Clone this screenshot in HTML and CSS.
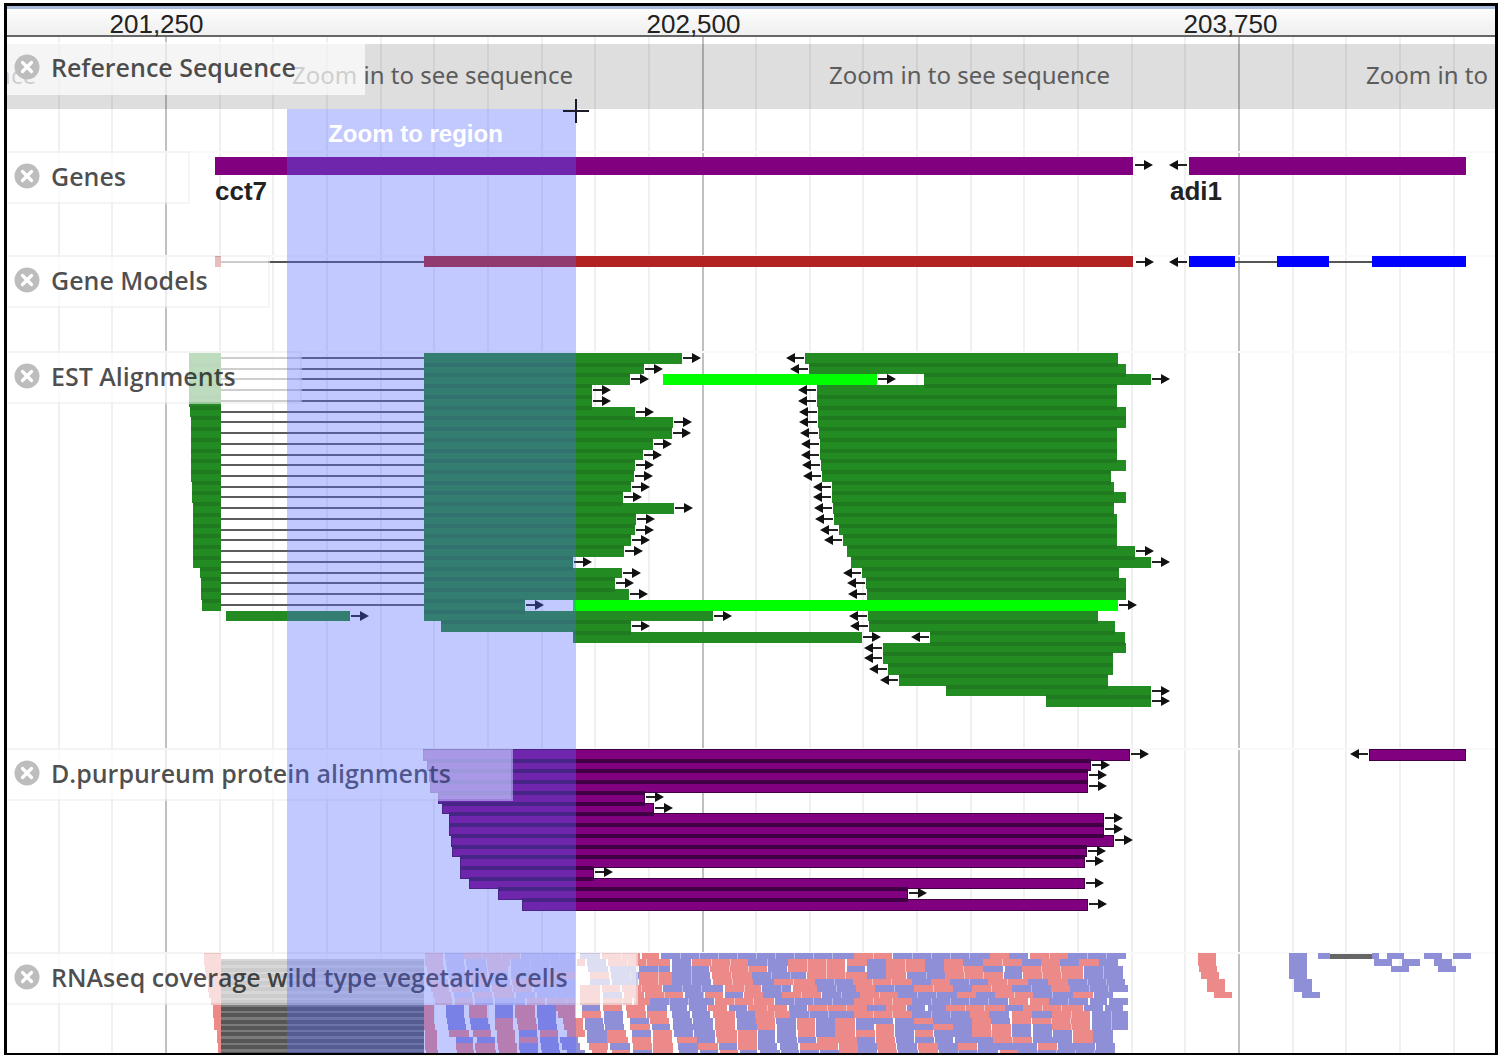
FILE: index.html
```html
<!DOCTYPE html>
<html lang="en">
<head>
<meta charset="utf-8">
<title>Genome browser</title>
<link rel="stylesheet" href="styles.css">
</head>
<body>
<svg class="defs" aria-hidden="true">
  <symbol id="close" viewBox="0 0 26 26">
    <circle cx="13" cy="13" r="12.500" fill="#bdbdbd"/>
    <path d="M8.500 8.500l9 9m0-9l-9 9" stroke="#fff" stroke-width="3.200" stroke-linecap="round"/>
  </symbol>
</svg>
<main class="browser">
  <svg class="grid" id="grid" aria-hidden="true"></svg>
  <header class="ruler">
    <span class="tick">201,250</span>
    <span class="tick">202,500</span>
    <span class="tick">203,750</span>
  </header>

  <section class="track sequence">
    <div class="band">
      <span class="hint">Zoom in to see sequence</span>
      <span class="hint">Zoom in to see sequence</span>
      <span class="hint">Zoom in to see sequence</span>
      <span class="hint">Zoom in to see sequence</span>
    </div>
    <div class="label label-sequence"><button class="close" type="button" aria-label="Close Reference Sequence"><svg class="icon"><use href="#close"/></svg></button><span>Reference Sequence</span></div>
  </section>

  <section class="track">
    <svg class="plot" id="genes" viewBox="7 151 1800 104" width="1800" height="104"></svg>
    <div class="label label-genes"><button class="close" type="button" aria-label="Close Genes"><svg class="icon"><use href="#close"/></svg></button><span>Genes</span></div>
  </section>

  <section class="track">
    <svg class="plot" id="models" viewBox="7 255 1800 96" width="1800" height="96"></svg>
    <div class="label label-models"><button class="close" type="button" aria-label="Close Gene Models"><svg class="icon"><use href="#close"/></svg></button><span>Gene Models</span></div>
  </section>

  <section class="track">
    <svg class="plot" id="est" viewBox="7 351 1800 397" width="1800" height="397"></svg>
    <div class="label label-est"><button class="close" type="button" aria-label="Close EST Alignments"><svg class="icon"><use href="#close"/></svg></button><span>EST Alignments</span></div>
  </section>

  <section class="track">
    <svg class="plot" id="protein" viewBox="7 748 1800 204" width="1800" height="204"></svg>
    <div class="label label-protein"><button class="close" type="button" aria-label="Close D.purpureum protein alignments"><svg class="icon"><use href="#close"/></svg></button><span>D.purpureum protein alignments</span></div>
  </section>

  <section class="track">
    <svg class="plot" id="rnaseq" viewBox="7 952 1800 101" width="1800" height="101"></svg>
    <div class="label label-rnaseq"><button class="close" type="button" aria-label="Close RNAseq coverage"><svg class="icon"><use href="#close"/></svg></button><span>RNAseq coverage wild type vegetative cells</span></div>
  </section>

  <div class="selection">Zoom to region</div>
  <svg class="crosshair" viewBox="0 0 28 28" aria-hidden="true"><path d="M14 2v24M1 14h26" stroke="#1c1c28" stroke-width="2"/></svg>
</main>
<script src="script.js"></script>
</body>
</html>
```
FILE: styles.css
```css
body {
  margin: 3px 2px 1px 4px;
  background: #fff;
  font-family: "Open Sans", "Noto Sans", sans-serif;
}

.defs {
  position: absolute;
  width: 0;
  height: 0;
}

.browser {
  position: relative;
  overflow: hidden;
  border: 3px solid #000;
  border-bottom-width: 2px;
}

.grid {
  position: absolute;
  top: 31px;
  left: 0;
  width: 1800px;
  height: 100%;
}

.ruler {
  position: relative;
  display: flex;
  box-sizing: border-box;
  height: 31px;
  margin-bottom: 5px;
  border-top: 3px solid #a9bbdc;
  border-bottom: 2px solid #666;
  background: linear-gradient(#fdfdfd, #efefef);
  overflow-x: clip;
}

.tick {
  flex: none;
  width: 537px;
  text-align: center;
  font: 26px/30px "Liberation Sans", sans-serif;
  color: #222;
}

.tick:first-child {
  margin-left: -119px;
}

.track {
  position: relative;
  overflow: hidden;
  box-shadow: inset 0 2px #f9f9f9;
}

.sequence {
  padding: 2px 0 42px;
  box-shadow: none;
}

.band {
  display: flex;
  padding-bottom: 4px;
  background: rgba(0, 0, 0, 0.13);
}

.hint {
  flex: none;
  width: 537px;
  text-align: center;
  font-family: "Noto Sans", sans-serif;
  font-size: 24px;
  line-height: 61px;
  color: #5c5c5c;
}

.hint:first-child {
  margin-left: -380px;
}

.plot {
  position: relative;
  display: block;
}

.label {
  position: absolute;
  top: 0;
  left: 0;
  display: flex;
  align-items: center;
  gap: 11px;
  box-sizing: border-box;
  height: 53px;
  padding: 0 0 3px 7px;
  border: 2px solid rgba(238, 238, 238, 0.6);
  border-left: 0;
  background: rgba(255, 255, 255, 0.7);
  background-clip: padding-box;
  color: rgba(0, 0, 0, 0.7);
  font-size: 25px;
  font-weight: 600;
  line-height: 34px;
  white-space: nowrap;
}

.label-sequence { width: 358px; border-color: transparent; background-clip: border-box; }
.label-genes { width: 183px; }
.label-models { width: 263px; }
.label-est { width: 295px; }
.label-protein { width: 506px; }
.label-rnaseq { width: 631px; }

.close {
  width: 26px;
  height: 26px;
  padding: 0;
  border: 0;
  background: none;
  cursor: pointer;
}

.icon {
  display: block;
  width: 26px;
  height: 26px;
}

.selection {
  position: absolute;
  top: 103px;
  bottom: 0;
  left: 280px;
  width: 289px;
  box-sizing: border-box;
  padding: 11px 32px 0 0;
  background: rgba(83, 103, 255, 0.355);
  color: #fff;
  font: bold 24px/28px "Liberation Sans", sans-serif;
  text-align: center;
}

.crosshair {
  position: absolute;
  top: 91px;
  left: 555px;
  width: 28px;
  height: 28px;
}

.gene-name {
  font: bold 26px "Liberation Sans", sans-serif;
  fill: #222;
}
```
FILE: script.js
```js
const NS = "http://www.w3.org/2000/svg";

function add(svg, name, attrs, text) {
  const el = document.createElementNS(NS, name);
  for (const key in attrs) el.setAttribute(key, attrs[key]);
  if (text) el.textContent = text;
  svg.appendChild(el);
}

function rect(svg, x1, x2, y, h, fill) {
  add(svg, "rect", { x: x1, y: y, width: x2 - x1, height: h, fill: fill });
}

// Strand arrows: x is the end that touches the feature.
function arrow(svg, x, y, dir) {
  const s = dir;
  add(svg, "path", { d: `M${x + s} ${y}H${x + 12 * s}`, stroke: "#222", "stroke-width": 2 });
  add(svg, "path", { d: `M${x + 10 * s} ${y - 5}L${x + 19 * s} ${y}L${x + 10 * s} ${y + 5}Z`, fill: "#111" });
}

// Grid lines: a major line every 1,250 bases, ten divisions between.
const grid = document.getElementById("grid");
for (let i = -2; i < 31; i++) {
  const major = i % 10 === 0;
  const x = Math.round(158 + i * 53.65);
  rect(grid, x, x + 2, 0, 1100, major ? "#c0c0c0" : "#f0f0f0");
}

// Genes
const genes = document.getElementById("genes");
rect(genes, 215, 1133, 157, 18, "#800080");
rect(genes, 1189, 1466, 157, 18, "#800080");
arrow(genes, 1134, 165, 1);
arrow(genes, 1188, 165, -1);
add(genes, "text", { x: 215, y: 200, class: "gene-name" }, "cct7");
add(genes, "text", { x: 1170, y: 200, class: "gene-name" }, "adi1");

// Gene models
const models = document.getElementById("models");
rect(models, 221, 424, 261, 2, "#555");
rect(models, 215, 221, 256, 11, "#b22222");
rect(models, 424, 1133, 256, 11, "#b22222");
arrow(models, 1135, 262, 1);
rect(models, 1189, 1466, 261, 2, "#555");
rect(models, 1189, 1235, 256, 11, "#00f");
rect(models, 1277, 1329, 256, 11, "#00f");
rect(models, 1372, 1466, 256, 11, "#00f");
arrow(models, 1188, 262, -1);

// Packed rows of [start, end, arrow, fill]; adjoining rows share a dark edge.
function packed(svg, top, rows, fill, edge, framed) {
  const y = i => Math.round(top + i * 10.73);
  rows.forEach((row, i) => row.forEach(([a, b, dir, color]) => {
    rect(svg, a, b, y(i), y(i + 1) - y(i) + (framed ? 1 : 0), color || fill);
    if (framed) {
      rect(svg, a, b, y(i), 1, edge);
      rect(svg, a, b, y(i + 1), 1, edge);
      rect(svg, a, a + 1, y(i), 11, edge);
      rect(svg, b - 1, b, y(i), 11, edge);
    }
    if (dir) arrow(svg, dir > 0 ? b : a, y(i) + 5, dir);
  }));
  for (let i = 1; i < rows.length; i++) {
    for (const p of rows[i - 1]) for (const q of rows[i]) {
      const a = Math.max(p[0], q[0]), b = Math.min(p[1], q[1]);
      if (b > a && !p[3] && !q[3]) rect(svg, a, b, y(i) - 1, 4, edge);
    }
  }
}

const est = document.getElementById("est");
const firstExon = [189, 189, 189, 189, 189, 190, 191, 191, 191, 191, 191, 191, 192, 192, 193, 193, 193, 193, 193, 193, 200, 201, 201, 202];
const leftEnd = [682, 644, 630, 592, 592, 635, 673, 672, 653, 643, 635, 634, 631, 623, 674, 636, 635, 631, 624, 573, 622, 615, 629, 525];
const right = [
  [805, 1118, -1], [809, 1126, -1], [924, 1151, 1], [817, 1117, -1], [817, 1117, -1], [818, 1126, -1],
  [818, 1126, -1], [819, 1117, -1], [820, 1117, -1], [820, 1117, -1], [821, 1126, -1], [822, 1111, -1],
  [832, 1114, -1], [832, 1126, -1], [833, 1114, -1], [834, 1117, -1], [839, 1117, -1], [843, 1117, -1],
  [847, 1135, 1], [851, 1151, 1], [862, 1119, -1], [866, 1126, -1], [867, 1126, -1], [573, 1118, 1, "#0f0"],
  [868, 1098, -1], [869, 1115, -1], [930, 1125, -1], [883, 1126, -1], [883, 1113, -1], [888, 1113, -1],
  [899, 1108, -1], [946, 1151, 1], [1046, 1151, 1]
];
const estRows = right.map((r, i) => {
  const row = [r];
  if (i < 24) row.push([firstExon[i], 221, 0], [424, leftEnd[i], 1]);
  return row;
});
estRows[2].push([663, 877, 1, "#0f0"]);
estRows[24].push([226, 350, 1], [424, 713, 1]);
estRows[25].push([441, 631, 1]);
estRows[26].push([573, 862, 1]);
for (let i = 0; i < 24; i++) rect(est, 221, 424, Math.round(353 + i * 10.73) + 4, 2, "#5c5c5c");
packed(est, 353, estRows, "#228b22", "#207a20", false);

packed(document.getElementById("protein"), 749, [
  [[423, 1130, 1], [1369, 1466, -1]], [[427, 1091, 1]], [[429, 1088, 1]], [[430, 1088, 1]],
  [[438, 645, 1]], [[442, 654, 1]], [[449, 1104, 1]], [[449, 1104, 1]], [[451, 1114, 1]],
  [[452, 1087, 1]], [[460, 1085, 1]], [[460, 594, 1]], [[469, 1085, 1]], [[498, 908, 1]], [[522, 1088, 1]]
], "#800080", "#400045", true);

// Reads per row: strand letter (r/b) with start-end.
const rna = document.getElementById("rnaseq");
const reads = [
  "r204-221 r425-443 b445-463 r463-520 b521-575 b580-600 r602-640 r642-659 b661-854 r854-892 b893-990 r990-1009 b1009-1028 r1030-1068 b1068-1126 r1198-1216 b1289-1307 b1318-1330 b1372-1379 b1387-1404 b1424-1442 b1453-1471",
  "r204-221 r425-443 b446-464 b466-486 r487-510 b511-575 r577-585 b587-606 r608-670 b672-691 r692-748 b748-788 r788-845 r847-867 b867-886 r886-925 b925-944 r944-963 b963-983 r983-1022 b1022-1041 r1041-1060 b1060-1079 r1079-1099 b1099-1118 r1198-1216 b1289-1307 b1374-1392 b1402-1420 b1434-1452",
  "r205-221 r427-444 b447-465 b467-487 r488-508 b511-550 b551-575 b588-608 b610-636 b639-670 b672-709 r710-767 b768-787 r788-845 b847-865 b867-886 r886-925 b925-944 r944-983 b983-1003 b1005-1022 r1022-1083 b1084-1123 r1199-1217 b1289-1307 b1391-1409 b1438-1456",
  "r206-221 r428-446 b449-467 r469-487 b489-508 b511-550 r551-575 r590-609 b611-640 r639-672 b672-710 r712-752 b752-806 r807-867 b867-886 r886-906 b907-945 r945-1003 b1004-1022 r1023-1083 b1084-1123 r1201-1219 b1289-1307",
  "r208-221 r430-448 b451-469 r471-489 b491-510 r512-550 b553-575 b590-610 b612-638 r639-672 b672-711 r713-753 b753-774 r774-815 b815-853 r853-912 b912-931 r931-950 b950-988 r988-1028 b1028-1048 r1048-1068 b1068-1125 r1207-1225 b1294-1312",
  "r208-221 r431-449 r452-470 b472-490 r492-512 r513-532 b534-575 r580-600 r602-620 r622-662 b663-723 r725-761 b762-791 r793-817 b817-856 r856-875 b875-914 r914-953 b953-972 r972-1012 b1012-1051 r1051-1070 b1070-1128 r1207-1225 b1294-1312",
  "r209-221 r433-451 b454-472 r474-492 r494-514 b516-535 b537-575 r580-600 b603-622 r624-644 r645-683 b685-703 r705-723 b725-743 r744-763 b763-782 r782-821 b822-860 r860-898 b898-957 r957-976 b976-995 r995-1033 b1033-1073 r1073-1093 b1094-1113 r1214-1232 b1302-1320",
  "r211-221 r435-452 r455-473 b475-493 b495-525 r527-545 r547-575 r580-600 r603-632 r634-650 b650-714 r715-774 b775-854 r854-912 b912-1008 r1009-1028 r1030-1049 b1049-1088 b1090-1107 b1109-1128",
  "r213-221 r424-434 b446-464 r469-487 b495-513 r515-535 b537-556 r556-575 b582-600 r603-622 r626-645 b647-667 b670-687 b689-707 r708-727 b729-747 r748-787 b789-807 r808-867 b867-886 r886-906 b907-925 b928-946 r946-1005 b1005-1023 r1023-1083 b1084-1103 b1105-1123",
  "r213-221 r424-434 b446-464 r469-487 b495-513 r515-535 b537-556 r558-575 r582-601 b604-623 r627-646 r647-667 b672-690 b692-710 r713-735 b736-755 r755-790 b790-854 r854-912 b912-970 r970-989 b989-1009 r1012-1032 b1032-1052 r1052-1090 b1092-1128",
  "r214-221 r424-434 b447-465 b470-488 r495-513 r517-536 b538-556 r563-583 b585-603 b604-623 b630-649 r650-669 b673-692 b693-713 r715-735 b737-756 r756-775 b776-796 r797-815 b816-835 r835-855 b856-874 b874-893 b895-914 r914-933 b933-953 b953-972 r972-991 b991-1010 r1012-1031 r1032-1090 b1092-1128",
  "r214-221 r424-435 b448-466 b471-490 r495-513 r518-537 b538-557 r564-583 b585-604 b605-624 r630-650 b652-670 b673-693 b693-713 r715-735 b737-757 r757-775 b777-796 r797-815 b816-835 r835-855 b856-874 r876-894 b895-915 b915-933 r933-953 b953-972 r972-991 r992-1011 b1012-1031 b1033-1052 r1052-1090 b1092-1128",
  "r217-221 r425-437 r449-469 r473-491 r497-515 b519-537 r540-558 r567-585 b587-607 r607-626 b632-651 r653-672 b674-693 b694-715 r716-737 r738-757 b758-775 b777-796 r798-815 b816-835 r835-855 r856-875 r876-894 b895-914 r915-933 b934-953 b953-972 r972-1011 b1012-1031 b1033-1052 b1053-1072 r1073-1093 b1093-1113",
  "r217-221 r425-437 b456-473 b477-495 r497-515 r519-538 b540-558 b560-578 b587-607 r607-628 r632-651 r653-672 r677-697 b697-715 r717-737 r738-757 b758-775 b777-797 b798-816 r817-837 r837-857 b857-875 r876-895 b896-914 b915-934 b935-953 b955-973 b973-993 r993-1032 b1033-1053 b1053-1072 r1073-1093 b1093-1113",
  "r218-221 r425-437 r456-473 r475-495 r498-517 b519-538 b541-559 b562-580 r589-608 b610-630 r633-652 r653-673 b678-698 r698-718 b719-737 r738-757 b758-777 b780-798 r800-818 r818-838 r839-858 b858-877 r877-896 b897-917 r918-938 b938-958 r958-977 b978-997 b997-1017 b1017-1037 r1038-1057 b1058-1077 b1077-1095 b1096-1115",
  "r218-221 r426-438 r457-474 r476-496 r499-517 b520-538 b542-560 b567-585 r592-607 r612-630 b633-652 r653-673 b679-698 b700-718 r720-738 b740-757 b760-780 b781-799 b800-819 b820-839 r839-858 b858-877 r878-897 b898-918 r919-938 b939-998 r1000-1018 b1018-1115"
];
const rowTop = i => 953 + Math.round(i * 6.45);
for (let i = 1; i < 16; i++) {
  rect(rna, 221, 424, rowTop(i), 7, "#7c7c7c");
  rect(rna, 221, 424, rowTop(i) + 2, 4, "#565656");
}
rect(rna, 1329, 1372, 954, 5, "#666");
reads.forEach((line, i) => {
  const y = rowTop(i), h = rowTop(i + 1) - y;
  for (const item of line.split(" ")) {
    const [a, b] = item.slice(1).split("-").map(Number);
    const red = item[0] === "r";
    rect(rna, a, b, y, h, red ? "#ec8a8a" : "#8f8fd8");
    // A run longer than one read shows a faint seam at each read boundary.
    for (let x = a + 19; x < b - 8; x += 19) rect(rna, x, x + 1, y, h, red ? "#f6c2c2" : "#b9b9ea");
  }
});
```
